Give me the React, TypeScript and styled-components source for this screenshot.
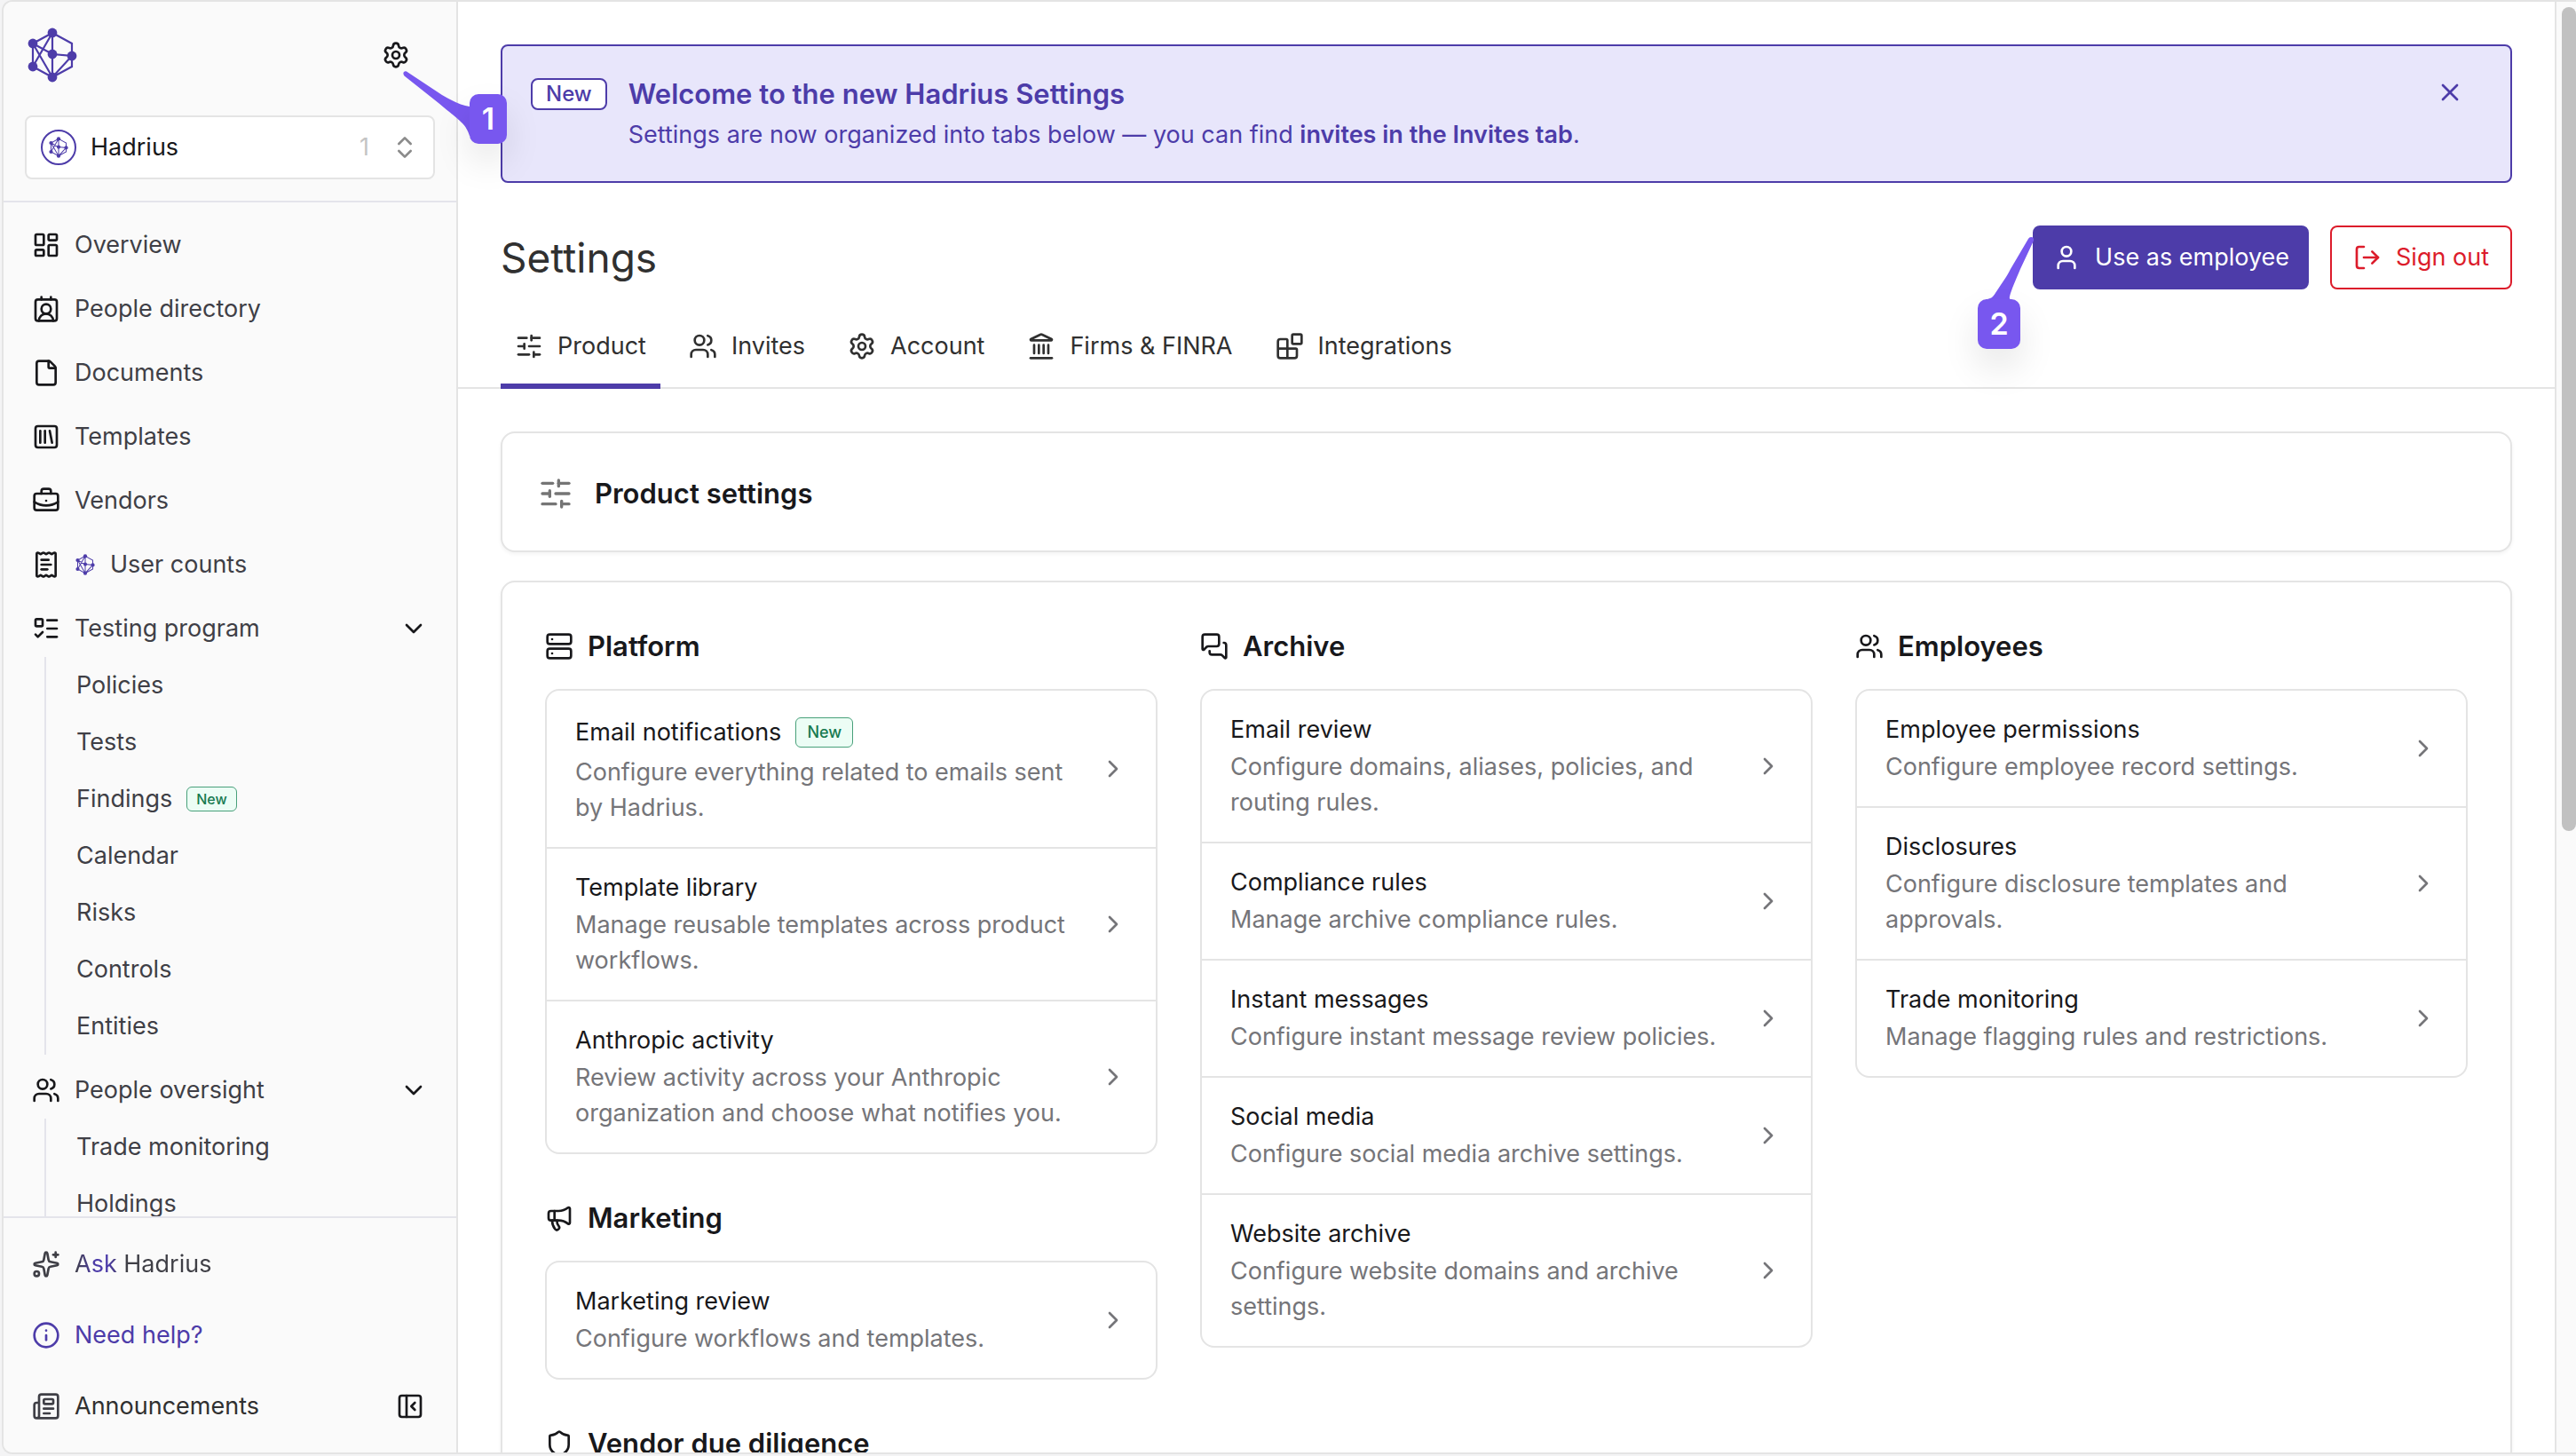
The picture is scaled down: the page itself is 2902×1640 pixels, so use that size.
import React from "react";
import styled, { createGlobalStyle } from "styled-components";
import {
  Blocks,
  BriefcaseBusiness,
  ChevronDown,
  ChevronRight,
  ChevronsUpDown,
  ContactRound,
  File,
  Info,
  Landmark,
  LayoutDashboard,
  ListTodo,
  LogOut,
  Megaphone,
  MessagesSquare,
  Newspaper,
  PanelLeftClose,
  ReceiptText,
  Server,
  Settings,
  Shield,
  SlidersHorizontal,
  Sparkles,
  SquareLibrary,
  User,
  Users,
  X,
  type LucideIcon,
} from "lucide-react";

const c = {
  brand: "#4d3ca9",
  brandSoft: "#e8e6fb",
  pin: "#7857ef",
  danger: "#dc1c2b",
  ink: "#18181b",
  nav: "#3f3f46",
  heading: "#303030",
  muted: "#757579",
  line: "#e4e4e4",
  navLine: "#e4e4eb",
  panel: "#fafafa",
};

const GlobalStyle = createGlobalStyle`
  *, *::before, *::after { box-sizing: border-box; }
  body {
    margin: 0;
    background: #f4f4f5;
    color: ${c.ink};
    font-family: Inter, "Liberation Sans", sans-serif;
    font-size: 27px;
    line-height: 40px;
    -webkit-font-smoothing: antialiased;
  }
  h1, h2, h3, p, ul { margin: 0; padding: 0; }
  ul { list-style: none; }
  a { color: inherit; text-decoration: none; }
  button, select { font: inherit; color: inherit; cursor: pointer; }
  svg { display: block; flex: none; }
`;

const Frame = styled.div`
  display: flex;
  height: calc(100vh - 2px);
  margin-left: 2px;
  border: solid ${c.line};
  border-width: 2px 0 2px 2px;
  border-radius: 12px 0 0 12px;
  background: #fff;
`;

/* Sidebar */

const Sidebar = styled.aside`
  display: flex;
  flex: none;
  flex-direction: column;
  width: 512px;
  border-right: 2px solid ${c.line};
  border-radius: 10px 0 0 10px;
  background: ${c.panel};
`;

const SidebarHeader = styled.div`
  display: flex;
  flex-direction: column;
  gap: 36px;
  padding: 28px 24px 24px;
  border-bottom: 2px solid ${c.navLine};
`;

const BrandRow = styled.div`
  display: flex;
  align-items: center;
  justify-content: space-between;
  padding-right: 28px;
`;

const PinAnchor = styled.div`
  position: relative;
  display: flex;
`;

const IconButton = styled.button<{ $color?: string }>`
  display: flex;
  padding: 0;
  border: 0;
  background: none;
  color: ${(p) => p.$color ?? c.ink};
`;

const OrgSwitcher = styled.label`
  display: flex;
  align-items: center;
  gap: 16px;
  height: 72px;
  padding: 0 16px;
  border: 2px solid ${c.line};
  border-radius: 8px;
  background: #fff;
  color: #8b8b8b;
`;

const OrgAvatar = styled.span`
  display: flex;
  align-items: center;
  justify-content: center;
  width: 40px;
  height: 40px;
  border: 2px solid ${c.brand};
  border-radius: 50%;
`;

const OrgSelect = styled.select`
  flex: 1;
  min-width: 0;
  padding: 0;
  border: 0;
  appearance: none;
  background: none;
  color: ${c.ink};
`;

const OrgCount = styled.span`
  margin-right: 8px;
  color: #c4c4c4;
`;

const NavScroll = styled.nav`
  flex: 1;
  min-height: 0;
  overflow: hidden;
  padding-top: 16px;
`;

const NavList = styled.ul`
  display: flex;
  flex-direction: column;
  gap: 8px;
`;

const NavLink = styled.a<{ $color?: string; $height?: number }>`
  display: flex;
  align-items: center;
  gap: 16px;
  height: ${(p) => p.$height ?? 64}px;
  padding: 0 32px;
  color: ${(p) => p.$color ?? c.nav};
`;

const NavIcon = styled.span<{ $color?: string }>`
  display: flex;
  color: ${(p) => p.$color ?? c.ink};
`;

const NavToggle = styled(NavLink).attrs({ as: "button", type: "button" })`
  width: 100%;
  border: 0;
  background: none;
  text-align: left;

  > svg:last-child {
    margin-left: auto;
    color: ${c.ink};
  }
`;

const SubList = styled.ul`
  margin-left: 46px;
  border-left: 2px solid ${c.navLine};
`;

const SubLink = styled.a`
  display: flex;
  align-items: center;
  gap: 16px;
  height: 64px;
  padding-left: 34px;
  color: ${c.nav};
`;

const Tag = styled.span<{ $small?: boolean }>`
  padding: ${(p) => (p.$small ? "0 10px" : "0 12px")};
  border: 1px solid #48a07a;
  border-radius: 6px;
  background: #ecfdf5;
  color: #177a50;
  font-size: ${(p) => (p.$small ? 16 : 18)}px;
  font-weight: 500;
  line-height: ${(p) => (p.$small ? 26 : 32)}px;
`;

const SidebarFooter = styled.div`
  padding: 12px 0;
  border-top: 2px solid ${c.navLine};
`;

const FooterRow = styled.div`
  display: flex;
  align-items: center;
  justify-content: space-between;
  padding-right: 36px;
`;

const Shimmer = styled.span`
  background: linear-gradient(90deg, ${c.nav} 0%, ${c.brand} 15%, ${c.brand} 25%, ${c.nav} 36%);
  background-clip: text;
  color: transparent;
`;

/* Main column */

const Main = styled.main`
  flex: 1;
  min-width: 0;
  overflow: hidden;
  border-right: 2px solid ${c.line};
`;

const PageHeader = styled.header`
  padding: 48px 48px 0;
  border-bottom: 2px solid ${c.line};
`;

const Banner = styled.section`
  display: flex;
  align-items: flex-start;
  gap: 24px;
  padding: 32px 52px 32px 32px;
  border: 2px solid ${c.brand};
  border-radius: 8px;
  background: ${c.brandSoft};
  color: ${c.brand};
`;

const BannerTag = styled.span`
  margin-top: 4px;
  padding: 0 15px;
  border: 2px solid ${c.brand};
  border-radius: 8px;
  background: #fff;
  font-size: 24px;
  font-weight: 500;
  line-height: 32px;
`;

const BannerBody = styled.div`
  flex: 1;
`;

const BannerTitle = styled.h2`
  margin-bottom: 4px;
  font-size: 31px;
  font-weight: 600;
  line-height: 44px;
`;

const BannerClose = styled(IconButton)`
  padding: 4px 0;
`;

const Strong = styled.strong`
  font-weight: 600;
`;

const TitleRow = styled.div`
  display: flex;
  align-items: center;
  justify-content: space-between;
  margin-top: 48px;
`;

const PageTitle = styled.h1`
  color: ${c.heading};
  font-size: 46px;
  font-weight: 400;
  line-height: 72px;
`;

const Actions = styled.div`
  display: flex;
  gap: 24px;
`;

const ActionButton = styled.button<{ $primary?: boolean }>`
  display: flex;
  align-items: center;
  gap: 16px;
  height: 72px;
  padding: 0 ${(p) => (p.$primary ? 20 : 24)}px;
  border: 2px solid ${(p) => (p.$primary ? c.brand : c.danger)};
  border-radius: 8px;
  background: ${(p) => (p.$primary ? c.brand : "#fff")};
  color: ${(p) => (p.$primary ? "#fff" : c.danger)};
`;

const Tabs = styled.nav`
  display: flex;
  gap: 16px;
  margin: 24px 0 -2px;
`;

const Tab = styled.a<{ $active?: boolean }>`
  display: flex;
  align-items: center;
  gap: 16px;
  padding: 20px 16px 22px;
  border-bottom: 6px solid ${(p) => (p.$active ? c.brand : "transparent")};
  color: ${c.heading};
`;

const Content = styled.div`
  display: flex;
  flex-direction: column;
  gap: 32px;
  padding: 48px;
`;

const Card = styled.section`
  border: 2px solid ${c.line};
  border-radius: 16px;
  background: #fff;
  box-shadow: 0 2px 4px rgba(0, 0, 0, 0.05);
`;

const IntroCard = styled(Card)`
  display: flex;
  align-items: center;
  gap: 24px;
  padding: 48px 40px 44px;
  color: #757575;
`;

const SectionTitle = styled.h2`
  color: ${c.ink};
  font-size: 31px;
  font-weight: 600;
  line-height: 40px;
`;

const GroupsCard = styled(Card)`
  display: grid;
  grid-template-columns: repeat(3, minmax(0, 1fr));
  gap: 48px;
  padding: 48px;
`;

const Column = styled.div`
  display: flex;
  flex-direction: column;
  gap: 48px;
`;

const Group = styled.section`
  display: flex;
  flex-direction: column;
  gap: 24px;
`;

const GroupTitle = styled.h3`
  display: flex;
  align-items: center;
  gap: 16px;
  font-size: 31px;
  font-weight: 600;
  line-height: 48px;
`;

const LinkList = styled.ul`
  border: 2px solid ${c.line};
  border-radius: 16px;

  > li + li {
    border-top: 2px solid ${c.line};
  }
`;

const SettingLink = styled.a`
  display: flex;
  align-items: center;
  gap: 32px;
  padding: 24px 32px;
  color: ${c.muted};
`;

const SettingText = styled.div`
  display: flex;
  flex: 1;
  flex-direction: column;
  gap: 2px;
`;

const SettingName = styled.div<{ $tagged?: boolean }>`
  display: flex;
  align-items: center;
  gap: 16px;
  min-height: ${(p) => (p.$tagged ? 46 : 40)}px;
  color: ${c.ink};
`;

const ScrollTrack = styled.div`
  flex: none;
  width: 22px;
  padding: 6px 0 0 6px;
  background: ${c.panel};
`;

const ScrollThumb = styled.div`
  height: 57%;
  border-radius: 8px;
  background: #c1c1c1;
`;

/* Numbered callouts lying over the page */

const Pin = styled.div<{ $x: number; $y: number; $w: number; $h: number }>`
  position: absolute;
  z-index: 2;
  left: ${(p) => p.$x}px;
  top: ${(p) => p.$y}px;
  display: flex;
  align-items: flex-end;
  width: ${(p) => p.$w}px;
  height: ${(p) => p.$h}px;
  pointer-events: none;
`;

const PinTail = styled.svg`
  position: absolute;
  inset: 0;
  fill: ${c.pin};
`;

const PinLabel = styled.span<{ $right?: boolean }>`
  position: relative;
  margin-left: ${(p) => (p.$right ? "auto" : 0)};
  width: ${(p) => (p.$right ? 42 : 48)}px;
  border-radius: 10px;
  background: ${c.pin};
  box-shadow: 0 20px 40px rgba(0, 0, 0, 0.1);
  color: #fff;
  font-size: 34px;
  font-weight: 600;
  line-height: 56px;
  text-align: center;
`;

function Logo({ width, height, line = 2.2 }: { width: number; height: number; line?: number }) {
  const nodes = [
    [28, 6],
    [6, 18],
    [6, 44],
    [28, 56],
    [50, 32],
    [28, 30],
  ];
  return (
    <svg width={width} height={height} viewBox="-3 -1 62 64" fill="none" stroke={c.brand} strokeWidth={line}>
      <path d="M28 6 50 18V44L28 56 6 44V18ZM28 6V56M6 18 28 30 50 32 28 56 6 18M28 6 6 44" />
      {nodes.map(([x, y]) => (
        <circle key={`${x}-${y}`} cx={x} cy={y} r="5.4" fill={c.brand} stroke="none" />
      ))}
    </svg>
  );
}

type NavItem = { label: string; icon: LucideIcon; branded?: boolean };

const navItems: NavItem[] = [
  { label: "Overview", icon: LayoutDashboard },
  { label: "People directory", icon: ContactRound },
  { label: "Documents", icon: File },
  { label: "Templates", icon: SquareLibrary },
  { label: "Vendors", icon: BriefcaseBusiness },
  { label: "User counts", icon: ReceiptText, branded: true },
];

const navGroups: { label: string; icon: LucideIcon; items: { label: string; isNew?: boolean }[] }[] = [
  {
    label: "Testing program",
    icon: ListTodo,
    items: [
      { label: "Policies" },
      { label: "Tests" },
      { label: "Findings", isNew: true },
      { label: "Calendar" },
      { label: "Risks" },
      { label: "Controls" },
      { label: "Entities" },
    ],
  },
  {
    label: "People oversight",
    icon: Users,
    items: [{ label: "Trade monitoring" }, { label: "Holdings" }],
  },
];

const tabs: { label: string; icon: LucideIcon }[] = [
  { label: "Product", icon: SlidersHorizontal },
  { label: "Invites", icon: Users },
  { label: "Account", icon: Settings },
  { label: "Firms & FINRA", icon: Landmark },
  { label: "Integrations", icon: Blocks },
];

type GroupData = {
  title: string;
  icon: LucideIcon;
  items: { name: string; text: string; isNew?: boolean }[];
};

const columns: GroupData[][] = [
  [
    {
      title: "Platform",
      icon: Server,
      items: [
        {
          name: "Email notifications",
          text: "Configure everything related to emails sent by Hadrius.",
          isNew: true,
        },
        { name: "Template library", text: "Manage reusable templates across product workflows." },
        {
          name: "Anthropic activity",
          text: "Review activity across your Anthropic organization and choose what notifies you.",
        },
      ],
    },
    {
      title: "Marketing",
      icon: Megaphone,
      items: [{ name: "Marketing review", text: "Configure workflows and templates." }],
    },
    { title: "Vendor due diligence", icon: Shield, items: [] },
  ],
  [
    {
      title: "Archive",
      icon: MessagesSquare,
      items: [
        { name: "Email review", text: "Configure domains, aliases, policies, and routing rules." },
        { name: "Compliance rules", text: "Manage archive compliance rules." },
        { name: "Instant messages", text: "Configure instant message review policies." },
        { name: "Social media", text: "Configure social media archive settings." },
        { name: "Website archive", text: "Configure website domains and archive settings." },
      ],
    },
  ],
  [
    {
      title: "Employees",
      icon: Users,
      items: [
        { name: "Employee permissions", text: "Configure employee record settings." },
        { name: "Disclosures", text: "Configure disclosure templates and approvals." },
        { name: "Trade monitoring", text: "Manage flagging rules and restrictions." },
      ],
    },
  ],
];

function SettingsGroup({ title, icon: Icon, items }: GroupData) {
  return (
    <Group>
      <GroupTitle>
        <Icon size={32} />
        {title}
      </GroupTitle>
      {items.length > 0 && (
        <LinkList>
          {items.map((item) => (
            <li key={item.name}>
              <SettingLink href="#">
                <SettingText>
                  <SettingName $tagged={item.isNew}>
                    {item.name}
                    {item.isNew && <Tag>New</Tag>}
                  </SettingName>
                  <p>{item.text}</p>
                </SettingText>
                <ChevronRight size={32} />
              </SettingLink>
            </li>
          ))}
        </LinkList>
      )}
    </Group>
  );
}

function AppSidebar() {
  return (
    <Sidebar>
      <SidebarHeader>
        <BrandRow>
          <Logo width={62} height={64} />
          <PinAnchor>
            <IconButton type="button" aria-label="Settings">
              <Settings size={32} />
            </IconButton>
            <Pin $x={24} $y={34} $w={117} $h={82}>
              <PinTail viewBox="0 0 117 82">
                <path d="M4 .5C1-.5-1 2.500 1.500 5.500L40 36C52 46 61 53 66 58 71 63 73 67 75 73H80V40H75C66 39 56 34 44 27Z" />
              </PinTail>
              <PinLabel $right>1</PinLabel>
            </Pin>
          </PinAnchor>
        </BrandRow>
        <OrgSwitcher>
          <OrgAvatar>
            <Logo width={24} height={26} line={2.6} />
          </OrgAvatar>
          <OrgSelect aria-label="Organization" defaultValue="Hadrius">
            <option>Hadrius</option>
          </OrgSelect>
          <OrgCount>1</OrgCount>
          <ChevronsUpDown size={32} />
        </OrgSwitcher>
      </SidebarHeader>

      <NavScroll aria-label="Main">
        <NavList>
          {navItems.map(({ label, icon: Icon, branded }) => (
            <li key={label}>
              <NavLink href="#">
                <NavIcon>
                  <Icon size={32} />
                </NavIcon>
                {branded && <Logo width={24} height={26} line={2.6} />}
                {label}
              </NavLink>
            </li>
          ))}
          {navGroups.map(({ label, icon: Icon, items }) => (
            <li key={label}>
              <NavToggle>
                <NavIcon>
                  <Icon size={32} />
                </NavIcon>
                {label}
                <ChevronDown size={32} />
              </NavToggle>
              <SubList>
                {items.map((item) => (
                  <li key={item.label}>
                    <SubLink href="#">
                      {item.label}
                      {item.isNew && <Tag $small>New</Tag>}
                    </SubLink>
                  </li>
                ))}
              </SubList>
            </li>
          ))}
        </NavList>
      </NavScroll>

      <SidebarFooter>
        <NavLink href="#" $height={80}>
          <NavIcon $color={c.nav}>
            <Sparkles size={32} />
          </NavIcon>
          <Shimmer>Ask Hadrius</Shimmer>
        </NavLink>
        <NavLink href="#" $height={80} $color={c.brand}>
          <NavIcon $color={c.brand}>
            <Info size={32} />
          </NavIcon>
          Need help?
        </NavLink>
        <FooterRow>
          <NavLink href="#" $height={80} $color={c.heading}>
            <NavIcon $color={c.nav}>
              <Newspaper size={32} />
            </NavIcon>
            Announcements
          </NavLink>
          <IconButton type="button" aria-label="Collapse sidebar">
            <PanelLeftClose size={32} />
          </IconButton>
        </FooterRow>
      </SidebarFooter>
    </Sidebar>
  );
}

export default function App() {
  return (
    <>
      <GlobalStyle />
      <Frame>
        <AppSidebar />
        <Main>
          <PageHeader>
            <Banner>
              <BannerTag>New</BannerTag>
              <BannerBody>
                <BannerTitle>Welcome to the new Hadrius Settings</BannerTitle>
                <p>
                  Settings are now organized into tabs below — you can find{" "}
                  <Strong>invites in the Invites tab</Strong>.
                </p>
              </BannerBody>
              <BannerClose type="button" aria-label="Dismiss" $color={c.brand}>
                <X size={32} />
              </BannerClose>
            </Banner>

            <TitleRow>
              <PageTitle>Settings</PageTitle>
              <Actions>
                <PinAnchor>
                  <ActionButton type="button" $primary>
                    <User size={32} />
                    Use as employee
                  </ActionButton>
                  <Pin $x={-62} $y={12} $w={64} $h={127}>
                    <PinTail viewBox="0 0 64 127">
                      <path d="M57 3C59-.5 64 .5 63 5L48 37C43 49 38 60 36 68 35.500 70 36 71 38 72V78H9V71C14 71 17 69 20 64 28 52 33 45 37 37Z" />
                    </PinTail>
                    <PinLabel>2</PinLabel>
                  </Pin>
                </PinAnchor>
                <ActionButton type="button">
                  <LogOut size={32} />
                  Sign out
                </ActionButton>
              </Actions>
            </TitleRow>

            <Tabs aria-label="Settings sections">
              {tabs.map(({ label, icon: Icon }, i) => (
                <Tab key={label} href="#" $active={i === 0}>
                  <Icon size={32} />
                  {label}
                </Tab>
              ))}
            </Tabs>
          </PageHeader>

          <Content>
            <IntroCard>
              <SlidersHorizontal size={40} />
              <SectionTitle>Product settings</SectionTitle>
            </IntroCard>
            <GroupsCard>
              {columns.map((groups) => (
                <Column key={groups[0].title}>
                  {groups.map((group) => (
                    <SettingsGroup key={group.title} {...group} />
                  ))}
                </Column>
              ))}
            </GroupsCard>
          </Content>
        </Main>
        <ScrollTrack>
          <ScrollThumb />
        </ScrollTrack>
      </Frame>
    </>
  );
}
